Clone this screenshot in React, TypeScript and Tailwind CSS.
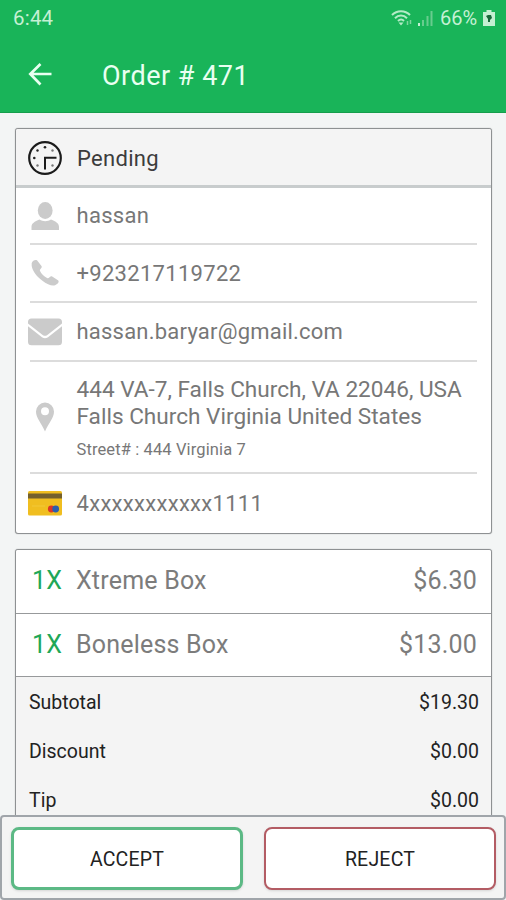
import type { ReactNode } from "react";

type RowProps = {
  icon: ReactNode;
  className: string;
  children: ReactNode;
};

type ItemProps = {
  name: string;
  price: string;
  className: string;
};

type TotalProps = {
  label: string;
  value: string;
};

const StatusIcons = () => (
  <div className="flex items-center">
    <svg width="22" height="18" viewBox="0 0 22 18" fill="none" stroke="#b4ebc7" strokeWidth="2">
      <path d="M1 6C6 .9 14 .9 19 6M4 9.200c3.400-3.500 8.600-3.500 12 0M7 12c2-2 4.200-2 6 0" />
      <path d="M7.500 13.500h5L10 16.500z" fill="#b4ebc7" stroke="none" />
      <path d="M16.500 12v4M19.500 11v4" stroke="#7fd6a0" strokeWidth="1.500" />
    </svg>
    <svg className="ml-[4px]" width="17" height="17" viewBox="0 0 17 17">
      <path d="M1 13h2v3H1z" fill="#c5f0d4" />
      <path d="M5 10h2v6H5zM9.500 6h2v10h-2zM13.500 1h2v15h-2z" fill="#68cc8e" />
    </svg>
    <span className="ml-[6px] w-[40px] text-[20px] leading-5 whitespace-nowrap text-[#c5f0d4]">66%</span>
    <svg className="ml-[3px]" width="12" height="18" viewBox="0 0 12 18">
      <path d="M3.500 1h5v2H12v14H0V3h3.500z" fill="#c4efd3" />
      <path d="M3 7l2-1h3l1 3-2 2v2H5V10z" fill="#17683a" />
    </svg>
  </div>
);

const ClockIcon = () => (
  <svg width="36" height="36" viewBox="0 0 36 36" fill="none" stroke="#1b1b1b">
    <circle cx="18" cy="18" r="15.800" strokeWidth="2.200" />
    <path d="M29.500 17.700H18v11.800" strokeWidth="2" />
    <g fill="#222" stroke="none">
      <circle cx="18" cy="7.300" r="1.300" />
      <circle cx="10.500" cy="10.500" r="1.200" />
      <circle cx="25.500" cy="10.500" r="1.200" fill="#777" />
      <circle cx="7.300" cy="18" r="1.300" />
      <circle cx="10.500" cy="25.500" r="1.200" fill="#777" />
      <circle cx="25.500" cy="25.500" r="1.200" fill="#777" />
    </g>
  </svg>
);

const PersonIcon = () => (
  <svg width="34" height="34" viewBox="0 0 34 34" fill="#cbcbcb">
    <ellipse cx="17.200" cy="11.500" rx="7.400" ry="8.500" />
    <path d="M3.500 31v-3c0-3.500 3-5.300 8-7.400 3.500 2.300 8 2.300 11.500 0 5 2 8 3.900 8 7.400v3z" />
  </svg>
);

const PhoneIcon = () => (
  <svg width="34" height="34" viewBox="0 0 34 34" fill="#cbcbcb">
    <path d="M3.700 7C4.700 4.500 7 3.300 9 4.200l4.700 6c.6 1.600-2 2.800-1.900 4.300 1.500 3.500 4.200 6 7.700 7.700 1.600.2 2.600-2.200 4.300-1.900l6.500 4.300c1.200 1.700-1 3.800-3.200 4.600-3.300 1.200-8-1-12-4C9 20.800 4.600 15.500 3.700 10z" />
  </svg>
);

const MailIcon = () => (
  <svg width="36" height="30" viewBox="0 0 36 30" fill="#cbcbcb">
    <path d="M1 6.500V5a3.500 3.500 0 0 1 3.500-3.500h27A3.500 3.500 0 0 1 35 5v1.500L20 18.200q-2 1.300-4 0z" />
    <path d="M1 9.300l14 11q3 2 6 0l14-11v15.400a3.500 3.500 0 0 1-3.500 3.500h-27A3.500 3.500 0 0 1 1 24.700z" />
  </svg>
);

const PinIcon = () => (
  <svg width="20" height="30" viewBox="0 0 20 30" fill="#cbcbcb">
    <path
      fillRule="evenodd"
      d="M10 .500A9 9 0 0 1 19 9.500C19 16 13.500 21 10 29.500 6.500 21 1 16 1 9.500A9 9 0 0 1 10 .500zM10 5.300a4 4 0 1 0 0 8 4 4 0 0 0 0-8z"
    />
  </svg>
);

const CardIcon = () => (
  <svg width="34" height="25" viewBox="0 0 34 25">
    <rect width="34" height="24.500" rx="1.500" fill="#f0be20" />
    <path d="M0 2.500h34v5H0z" fill="#74602c" />
    <path d="M4 14.500h13v1H4z" fill="#f3c838" />
    <circle cx="23.300" cy="18" r="3.400" fill="#dc3526" />
    <circle cx="27.700" cy="18" r="3.400" fill="#2a5fae" />
  </svg>
);

const InfoRow = ({ icon, className, children }: RowProps) => (
  <div className={`ml-[14px] mr-[14px] flex items-center ${className}`}>
    <div className="-ml-[3px] flex w-[36px] shrink-0 justify-center">{icon}</div>
    <div className="ml-[13.500px] whitespace-nowrap text-[#777]">{children}</div>
  </div>
);

const ItemRow = ({ name, price, className }: ItemProps) => (
  <div className={`flex items-center border-b border-[#97999b] pr-[14px] pb-px pl-[16px] text-[25px] tracking-[0.2px] text-[#7c7c7c] ${className}`}>
    <span className="w-[44px] text-[#21a757]">1X</span>
    <span>{name}</span>
    <span className="ml-auto">{price}</span>
  </div>
);

const TotalRow = ({ label, value }: TotalProps) => (
  <div className="flex h-[49px] items-center justify-between pr-[12px] pl-[13px] text-[19.5px] text-[#222]">
    <span>{label}</span>
    <span>{value}</span>
  </div>
);

const App = () => {
  return (
    <div className="flex h-[900px] w-[506px] flex-col overflow-hidden bg-[#f3f5f5] font-['Roboto',sans-serif]">
      <header className="h-[113px] shrink-0 border-b border-[#159e4c] bg-[#19b459]">
        <div className="flex h-9 items-center justify-between pr-[11px] pl-[13px]">
          <span className="text-[20.5px] tracking-[0.2px] text-[#c5f0d4]">6:44</span>
          <StatusIcons />
        </div>
        <div className="flex h-[77px] items-center pl-[28px] text-[#e9fff1]">
          <svg width="24" height="24" viewBox="0 0 24 24" fill="none" stroke="currentColor" strokeWidth="2.700">
            <path d="M23.500 11H3M12.500 1L2.300 11l10.200 10.500" />
          </svg>
          <h1 className="ml-[50px] pt-[3px] text-[27px] tracking-[0.5px]">Order # 471</h1>
        </div>
      </header>

      <main className="flex min-h-0 grow flex-col overflow-hidden pt-[15px] pr-[14px] pl-[15px]">
        <section className="h-[406px] shrink-0 rounded-[3px] border border-[#8e9193] bg-white shadow-[0_0_1px_#8e9193]">
          <div className="flex h-[59px] items-center rounded-t-[2px] border-b-[3px] border-[#c8cccd] bg-[#f4f4f4] pt-[2px] pl-[11px]">
            <ClockIcon />
            <span className="ml-[14px] text-[22px] tracking-[0.3px] text-[#3c3c3c]">Pending</span>
          </div>
          <InfoRow icon={<PersonIcon />} className="h-[57px] border-b-2 border-[#dcdcdc]">
            <p className="text-[22px] tracking-[0.3px]">hassan</p>
          </InfoRow>
          <InfoRow icon={<PhoneIcon />} className="h-[58px] border-b-2 border-[#dcdcdc]">
            <p className="pt-px text-[22px] tracking-[0.3px]">+923217119722</p>
          </InfoRow>
          <InfoRow icon={<MailIcon />} className="h-[59px] border-b-2 border-[#dcdcdc]">
            <p className="text-[22px] tracking-[0.22px]">hassan.baryar@gmail.com</p>
          </InfoRow>
          <InfoRow icon={<PinIcon />} className="h-[112px] border-b-2 border-[#dcdcdc]">
            <p className="mt-[3px] text-[22.6px] leading-[27px]">444 VA-7, Falls Church, VA 22046, USA</p>
            <p className="text-[22.6px] leading-[27px]">Falls Church Virginia United States</p>
            <p className="mt-[8px] text-[16.5px] leading-[24px] tracking-[0.12px]">Street# : 444 Virginia 7</p>
          </InfoRow>
          <InfoRow icon={<CardIcon />} className="h-[58px]">
            <p className="text-[22px] tracking-[0.3px]">4xxxxxxxxxxx1111</p>
          </InfoRow>
        </section>

        <section className="mt-[15px] h-[300px] shrink-0 rounded-[3px] border border-[#8e9193] bg-[#f4f4f4] shadow-[0_0_1px_#8e9193]">
          <ItemRow name="Xtreme Box" price="$6.30" className="h-[64px] rounded-t-[2px] bg-white" />
          <ItemRow name="Boneless Box" price="$13.00" className="h-[63px] bg-white" />
          <div className="pt-px">
            <TotalRow label="Subtotal" value="$19.30" />
            <TotalRow label="Discount" value="$0.00" />
            <TotalRow label="Tip" value="$0.00" />
          </div>
        </section>
      </main>

      <footer className="flex h-[85px] shrink-0 items-center justify-between rounded-[4px] border-2 border-[#a0a5aa] bg-[#f4f4f4] pt-px pr-[8px] pl-[9px] text-[19.5px] text-[#222]">
        <button className="h-[63px] w-[232px] rounded-[8px] border-[3px] border-[#5cb985] bg-white pt-[3px] tracking-[0.2px] shadow-sm">
          ACCEPT
        </button>
        <button className="h-[63px] w-[232px] rounded-[8px] border-2 border-[#b35c64] bg-white pt-[3px] tracking-[0.2px] shadow-sm">
          REJECT
        </button>
      </footer>
    </div>
  );
};

export default App;
